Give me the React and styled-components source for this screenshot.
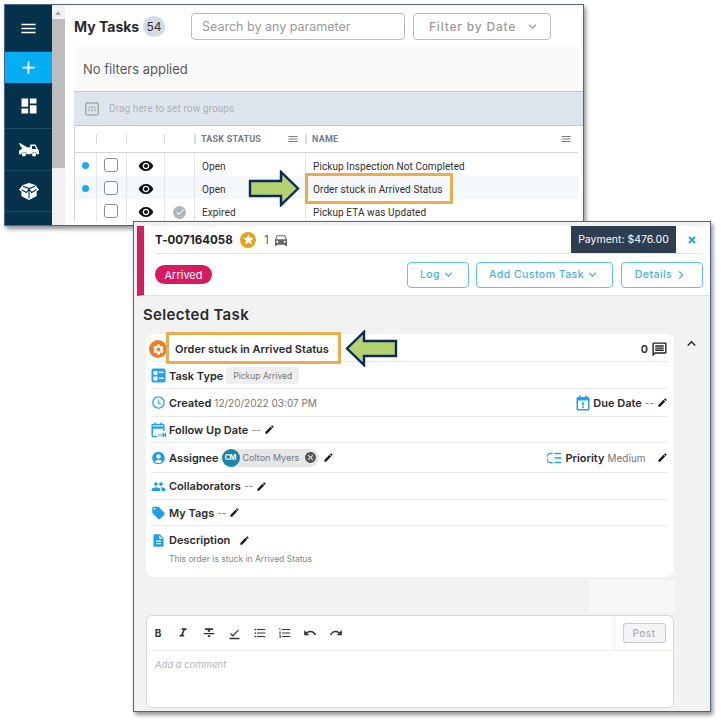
import React from "react";
import styled, { createGlobalStyle } from "styled-components";
import {
  MdMenu,
  MdAdd,
  MdDashboard,
  MdVisibility,
  MdStar,
  MdDirectionsCar,
  MdAccessTime,
  MdAccountCircle,
  MdPeople,
  MdLocalOffer,
  MdDescription,
  MdEdit,
  MdSettings,
  MdFormatItalic,
  MdFormatStrikethrough,
  MdFormatListBulleted,
  MdFormatListNumbered,
  MdUndo,
  MdRedo,
  MdCancel,
  MdOutlineMessage,
  MdKeyboardArrowDown,
  MdKeyboardArrowUp,
  MdKeyboardArrowRight,
  MdCheck,
} from "react-icons/md";

const Global = createGlobalStyle`
  html, body {
    margin: 0;
    background: #fff;
  }
  body {
    font-family: "Inter", "Noto Sans", sans-serif;
    color: #2b2b2b;
  }
  * {
    box-sizing: border-box;
  }
`;

const Canvas = styled.div`
  position: relative;
  width: 721px;
  height: 723px;
  overflow: hidden;
  background: #fff;
`;

const Win = styled.div`
  position: absolute;
  left: ${(p) => p.$left}px;
  top: ${(p) => p.$top}px;
  width: ${(p) => p.$w}px;
  height: ${(p) => p.$h}px;
  border: 1.5px solid #4f6590;
  box-shadow: 2px 3px 4px rgba(60, 60, 60, 0.55);
  background: #fff;
  overflow: hidden;
`;

const TasksWin = styled.div`
  display: flex;
  height: 100%;
`;

const Sidebar = styled.nav`
  width: 47px;
  flex: none;
  background: #04324a;
  color: #fff;
  display: flex;
  flex-direction: column;
`;

const SideItem = styled.div`
  height: ${(p) => p.$h}px;
  flex: none;
  display: flex;
  align-items: center;
  justify-content: center;
  background: ${(p) => (p.$active ? "#05aef2" : "transparent")};
  border-bottom: ${(p) => (p.$line ? "1px solid #1c4a60" : "none")};
`;

const ScrollTrack = styled.div`
  width: 13px;
  flex: none;
  background: #f1f1f1;
  position: relative;
  padding-top: 14px;
`;

const ScrollArrow = styled.div`
  position: absolute;
  top: 6px;
  left: 3px;
  width: 0;
  height: 0;
  border-left: 3.5px solid transparent;
  border-right: 3.5px solid transparent;
  border-bottom: 4px solid #a8a8a8;
`;

const ScrollThumb = styled.div`
  height: 149px;
  background: #bdbdbd;
`;

const TasksMain = styled.div`
  flex: 1;
  min-width: 0;
  padding-left: 9px;
  padding-right: 5px;
`;

const TopBar = styled.div`
  height: 42px;
  display: flex;
  align-items: center;
`;

const PageTitle = styled.div`
  font-size: 14px;
  font-weight: 700;
  color: #2b2b2b;
  width: 69px;
  white-space: nowrap;
`;

const CountBadge = styled.div`
  width: 22px;
  height: 21px;
  border-radius: 50%;
  background: #d4dbe5;
  font-size: 12px;
  display: flex;
  align-items: center;
  justify-content: center;
  color: #333;
`;

const SearchBox = styled.div`
  width: 214px;
  height: 27px;
  margin-left: 26px;
  border: 1px solid #bcbcbc;
  border-radius: 4px;
  padding-left: 10px;
  font-size: 12.5px;
  color: #9a9a9a;
  display: flex;
  align-items: center;
`;

const FilterBox = styled.div`
  width: 138px;
  height: 27px;
  margin-left: 8px;
  border: 1px solid #bcbcbc;
  border-radius: 4px;
  padding-left: 15px;
  font-size: 12px;
  letter-spacing: 0.8px;
  font-weight: 500;
  color: #9a9a9a;
  display: flex;
  align-items: center;
  gap: 9px;
`;

const FilterInfo = styled.div`
  height: 44px;
  margin-right: -5px;
  background: #fafafa;
  padding-left: 9px;
  display: flex;
  align-items: center;
  font-size: 13px;
  color: #5a5a5a;
`;

const GroupBar = styled.div`
  height: 35px;
  margin-right: -5px;
  background: #dfe5ec;
  border-top: 1px solid #c8c8c8;
  border-bottom: 1px solid #c8c8c8;
  display: flex;
  align-items: center;
  padding-left: 11px;
  gap: 10px;
  font-family: "Roboto", sans-serif;
  font-size: 10px;
  letter-spacing: 0.1px;
  color: #a9b2bd;
`;

const GridRow = styled.div`
  display: grid;
  grid-template-columns: 21px 30px 38px 30px 111px 1fr;
  height: ${(p) => p.$h}px;
  background: ${(p) => (p.$tint ? "#f5f8fb" : "#fff")};
  border-bottom: ${(p) => (p.$head ? "1px solid #d4d4d4" : "none")};
  border-left: 1px solid #d8d8d8;
  font-family: "Roboto", sans-serif;
`;

const HeadCell = styled.div`
  display: flex;
  align-items: center;
  justify-content: space-between;
  padding: 0 6px 0 ${(p) => (p.$text ? 7 : 0)}px;
  font-size: 9px;
  font-weight: 700;
  letter-spacing: 0.2px;
  color: #767c84;
  position: relative;
  &::after {
    content: "";
    position: absolute;
    left: 0;
    top: 8px;
    bottom: 8px;
    width: ${(p) => (p.$first ? 0 : p.$text ? 2 : 1)}px;
    background: #dcdcdc;
  }
`;

const Cell = styled.div`
  display: flex;
  align-items: center;
  justify-content: ${(p) => (p.$text ? "flex-start" : "center")};
  padding-left: ${(p) => (p.$text ? 7 : 0)}px;
  padding-top: 3px;
  font-size: 10px;
  letter-spacing: 0.1px;
  color: #2f2f2f;
  border-left: ${(p) => (p.$first ? "none" : "1px solid #e6e6e6")};
`;

const Dot = styled.span`
  width: 7px;
  height: 7px;
  border-radius: 50%;
  margin-top: -2px;
  background: #1ea7ea;
`;

const Checkbox = styled.span`
  width: 14px;
  height: 14px;
  margin: -3px 2px 0 0;
  border: 1px solid #8b9096;
  border-radius: 3px;
  background: #fff;
`;

const DoneMark = styled.span`
  width: 13px;
  height: 13px;
  border-radius: 50%;
  background: #abb6bd;
  color: #fff;
  display: flex;
  align-items: center;
  justify-content: center;
`;

const DetailWin = styled.div`
  height: 100%;
  background: #f1f2f2;
  display: flex;
  flex-direction: column;
  padding-top: 4px;
`;

const DetailHead = styled.header`
  height: 70px;
  flex: none;
  margin-left: 3px;
  background: #fff;
  border-left: 7px solid #d81b60;
  border-bottom: 1px solid #dfe2e6;
  padding-left: 11px;
  padding-right: 7px;
`;

const IdRow = styled.div`
  height: 28px;
  display: flex;
  align-items: center;
  border-bottom: 1px solid #e4e4e4;
  position: relative;
`;

const OrderId = styled.div`
  font-size: 11.5px;
  font-weight: 700;
  letter-spacing: 0.05px;
  color: #222;
  width: 85px;
  white-space: nowrap;
`;

const StarCircle = styled.span`
  width: 16px;
  height: 16px;
  border-radius: 50%;
  background: #e3a21a;
  color: #fff;
  display: flex;
  align-items: center;
  justify-content: center;
`;

const CarCount = styled.span`
  margin-left: 8px;
  font-size: 12px;
  color: #666;
  display: flex;
  align-items: center;
  gap: 4px;
`;

const PayTag = styled.div`
  margin-left: auto;
  margin-right: 27px;
  align-self: flex-start;
  width: 105px;
  height: 27px;
  background: #2c3e50;
  color: #fff;
  font-size: 10.5px;
  display: flex;
  align-items: center;
  justify-content: center;
`;

const CloseBtn = styled.svg`
  position: absolute;
  right: 7px;
  top: 10px;
`;

const ActionRow = styled.div`
  height: 41px;
  display: flex;
  align-items: center;
  gap: 7px;
`;

const StatusPill = styled.span`
  width: 57px;
  height: 19px;
  border-radius: 10px;
  background: #d81b60;
  color: #fff;
  font-size: 11px;
  display: flex;
  align-items: center;
  justify-content: center;
  margin-right: auto;
`;

const OutlineBtn = styled.button`
  width: ${(p) => p.$w}px;
  height: 26px;
  margin-left: ${(p) => p.$gap || 0}px;
  border: 1px solid #5cc3f3;
  border-radius: 4px;
  background: #fff;
  color: #43b4ec;
  font-family: inherit;
  font-size: 10.5px;
  font-weight: 500;
  letter-spacing: 0.45px;
  display: flex;
  align-items: center;
  justify-content: center;
  gap: 1px;
  padding: 0;
`;

const DetailBody = styled.div`
  flex: 1;
  padding: 0 36px 0 12px;
  position: relative;
`;

const SectionTitle = styled.h2`
  margin: 0 0 0 -3px;
  height: 38px;
  padding-bottom: 2px;
  font-size: 15px;
  font-weight: 600;
  letter-spacing: 0.35px;
  color: #2b2b2b;
  display: flex;
  align-items: center;
`;

const Card = styled.section`
  height: 243px;
  background: #fff;
  border-radius: 8px;
  padding: 0 6px 0 5px;
`;

const InfoRow = styled.div`
  height: ${(p) => p.$h}px;
  padding-top: ${(p) => p.$pad || 0}px;
  display: flex;
  align-items: center;
  border-bottom: ${(p) => (p.$last ? "none" : "1px solid #e8eaec")};
  font-size: 11px;
  gap: 3px;
  color: #777;
`;

const IconSlot = styled.span`
  width: 15px;
  height: 16px;
  flex: none;
  color: #1e9fee;
  display: flex;
  align-items: center;
  justify-content: center;
`;

const Label = styled.b`
  font-weight: 600;
  color: #2b2b2b;
`;

const Value = styled.span`
  font-size: 10px;
  color: #777;
  white-space: nowrap;
`;

const Push = styled.div`
  margin-left: auto;
  display: flex;
  align-items: center;
  gap: 3px;
`;

const TaskName = styled.div`
  margin-left: 5px;
  font-size: 11px;
  font-weight: 600;
  color: #2b2b2b;
`;

const GearCircle = styled.span`
  width: 18px;
  height: 18px;
  margin-left: -2px;
  flex: none;
  border-radius: 50%;
  background: #f47b20;
  color: #fff;
  display: flex;
  align-items: center;
  justify-content: center;
`;

const TypeChip = styled.span`
  height: 17px;
  padding: 0 7px;
  border-radius: 3px;
  background: #eeeeee;
  font-size: 8.5px;
  color: #777;
  display: flex;
  align-items: center;
`;

const PersonChip = styled.span`
  width: 97px;
  height: 18px;
  border-radius: 9px;
  background: #e6e6e6;
  font-size: 9px;
  color: #777;
  display: flex;
  align-items: center;
  gap: 3px;
  margin-right: 1px;
  white-space: nowrap;
`;

const Avatar = styled.span`
  width: 18px;
  height: 18px;
  flex: none;
  border-radius: 50%;
  background: #1b87ad;
  color: #fff;
  font-size: 7px;
  font-weight: 700;
  display: flex;
  align-items: center;
  justify-content: center;
`;

const ChipClose = styled.span`
  margin-left: auto;
  margin-right: 2px;
  color: #555;
  display: flex;
`;

const DescBlock = styled.div`
  height: 51px;
  padding-top: 6px;
`;

const DescHead = styled.div`
  display: flex;
  align-items: center;
  font-size: 11px;
  gap: 3px;
`;

const DescText = styled.div`
  margin: 6px 0 0 18px;
  font-size: 8.5px;
  color: #888;
`;

const CollapseBtn = styled.span`
  position: absolute;
  right: 10px;
  top: 39px;
  color: #222;
  display: flex;
`;

const Ghost = styled.div`
  width: 86px;
  height: 32px;
  margin: 3px -1px 3px auto;
  background: #f7f7f7;
`;

const Editor = styled.div`
  height: 93px;
  background: #fff;
  border: 1px solid #d6d8da;
  border-radius: 6px;
`;

const EditorBar = styled.div`
  height: 35px;
  border-bottom: 1px solid #f2f2f2;
  display: flex;
  align-items: center;
  gap: 3.4px;
  color: #333;
`;

const ToolBtn = styled.span`
  width: 22px;
  display: flex;
  align-items: center;
  justify-content: center;
  font-size: 10px;
  font-weight: 700;
`;

const PostArea = styled.div`
  margin-left: auto;
  width: 59px;
  height: 100%;
  border-left: 1px solid #eeeeee;
  display: flex;
  align-items: center;
  justify-content: center;
`;

const PostBtn = styled.button`
  width: 43px;
  height: 20px;
  padding: 0;
  border: 1px solid #c6cad2;
  border-radius: 3px;
  background: #f5f5f7;
  color: #a8adb8;
  font-family: inherit;
  font-size: 10px;
  font-weight: 500;
  letter-spacing: 0.5px;
`;

const Placeholder = styled.div`
  padding: 8px 0 0 8px;
  font-size: 9.5px;
  font-style: italic;
  color: #b5b5b5;
`;

// annotations pasted over the screenshots
const Highlight = styled.div`
  position: absolute;
  left: ${(p) => p.$left}px;
  top: ${(p) => p.$top}px;
  width: ${(p) => p.$w}px;
  height: ${(p) => p.$h}px;
  border: 3px solid #e9ae4c;
  border-radius: 1px;
`;

const ArrowSvg = styled.svg`
  position: absolute;
  left: ${(p) => p.$left}px;
  top: ${(p) => p.$top}px;
`;

const Pencil = () => <MdEdit size={11} color="#1a1a1a" />;

const GroupIcon = () => (
  <svg width="14" height="14" viewBox="0 0 14 14" fill="none" stroke="#a3a9b0">
    <rect x="0.75" y="1" width="12.5" height="12" rx="2" strokeWidth="1.5" />
    <path d="M3.5 5h7" strokeWidth="1" />
    <path d="M4 6.5v3M7 6.5v3M10 6.5v3" strokeWidth="1.2" />
  </svg>
);

const TowTruck = () => (
  <svg width="20" height="14" viewBox="0 0 20 14" fill="#fff">
    <path d="M0 .8l1-.8 7 4.2h3.2V1.6h5.2L19 6.4c.6.5 1 1 1 1.8v3h-2.1a2.9 2.9 0 0 0-5.6 0H7.7a2.9 2.9 0 0 0-5.6 0H0V7.6l3.2-1.8z" />
    <circle cx="4.9" cy="11.4" r="2.1" />
    <circle cx="15.1" cy="11.4" r="2.1" />
    <path d="M13 3h2.6l1.7 3H13z" fill="#04324a" />
  </svg>
);

const OpenBox = () => (
  <svg width="20" height="17" viewBox="0 0 20 17">
    <path
      d="M10 .5l6.2 2 3.3 4.3-2.4 1.5v4.6L10 16.5l-7.1-3.6V8.3L.5 6.8l3.3-4.3z"
      fill="#fff"
      stroke="#fff"
      strokeLinejoin="round"
    />
    <path
      d="M4 3.2L10 5.6l6-2.4M10 5.6v10M10 6l2.6 3.6 4.8-2.8M10 6L7.4 9.6 2.6 6.8"
      fill="none"
      stroke="#04324a"
      strokeWidth="1.1"
    />
  </svg>
);

const TaskTypeIcon = () => (
  <svg width="15" height="15" viewBox="0 0 15 15">
    <rect x="0.5" y="0.5" width="14" height="14" rx="2" fill="#22a2f0" />
    <rect x="2.5" y="3" width="4" height="4" fill="#fff" />
    <rect x="2.5" y="8.5" width="4" height="4" fill="#fff" />
    <rect x="8" y="3.5" width="4.5" height="1.5" fill="#fff" />
    <rect x="8" y="9.5" width="4.5" height="1.5" fill="#fff" />
  </svg>
);

const DueIcon = () => (
  <svg width="14" height="16" viewBox="0 0 14 16">
    <rect x="0.5" y="2" width="13" height="13.5" rx="1.5" fill="#22a2f0" />
    <rect x="3" y="0.5" width="1.6" height="3" fill="#22a2f0" />
    <rect x="9.4" y="0.5" width="1.6" height="3" fill="#22a2f0" />
    <rect x="2" y="5.5" width="10" height="8.5" fill="#fff" />
    <rect x="6.2" y="7" width="1.6" height="3.6" fill="#22a2f0" />
    <rect x="6.2" y="11.4" width="1.6" height="1.6" fill="#22a2f0" />
  </svg>
);

const FollowIcon = () => (
  <svg width="15" height="16" viewBox="0 0 15 16" fill="none" stroke="#22a2f0" strokeWidth="1.5">
    <path d="M6 14.5H2.2a1 1 0 0 1-1-1V3.4a1 1 0 0 1 1-1h9.6a1 1 0 0 1 1 1V9" />
    <path d="M1.2 5.6h11.6" strokeWidth="2.4" />
    <path d="M4 .6v3M10 .6v3" />
    <path d="M7 13h6.5M11.4 10.8l2.2 2.2-2.2 2.2M14.6 10.8v4.4" strokeWidth="1.2" />
  </svg>
);

const PriorityIcon = () => (
  <svg width="16" height="12" viewBox="0 0 16 12" fill="none" stroke="#22a2f0" strokeWidth="1.6">
    <path d="M6 1H4.6a4.4 4.4 0 0 0 0 10H6" />
    <path d="M8 1.2h7M8 6h7M8 10.8h7" />
  </svg>
);

const UnderCheck = () => (
  <svg width="13" height="13" viewBox="0 0 13 13" fill="none" stroke="#333" strokeWidth="1.2">
    <path d="M2.5 6.5l2.5 2.4 5.5-6" />
    <path d="M1.5 11.5h10" strokeWidth="1.5" />
  </svg>
);

const RightArrow = () => (
  <ArrowSvg $left={248} $top={170} width="53" height="37" viewBox="0 0 53 37">
    <path d="M2 11h31V2l17 16.5L33 35v-9H2z" fill="#b5d271" stroke="#0b2a57" strokeWidth="2.4" />
  </ArrowSvg>
);

const LeftArrow = () => (
  <ArrowSvg $left={344} $top={330} width="54" height="37" viewBox="0 0 54 37">
    <path d="M52 11H20V2L3 18.5 20 35v-9h32z" fill="#b5d271" stroke="#0b2a57" strokeWidth="2.4" />
  </ArrowSvg>
);

const tasks = [
  { dot: true, done: false, status: "Open", name: "Pickup Inspection Not Completed" },
  { dot: true, done: false, status: "Open", name: "Order stuck in Arrived Status", tint: true },
  { dot: false, done: true, status: "Expired", name: "Pickup ETA was Updated" },
];

const App = () => {
  return (
    <Canvas>
      <Global />

      <Win $left={4} $top={4} $w={580} $h={222}>
        <TasksWin>
          <Sidebar>
            <SideItem $h={47} $line>
              <MdMenu size={19} />
            </SideItem>
            <SideItem $h={31} $active>
              <MdAdd size={21} />
            </SideItem>
            <SideItem $h={46} $line>
              <MdDashboard size={20} />
            </SideItem>
            <SideItem $h={42} $line>
              <TowTruck />
            </SideItem>
            <SideItem $h={41} $line>
              <OpenBox />
            </SideItem>
          </Sidebar>
          <ScrollTrack>
            <ScrollArrow />
            <ScrollThumb />
          </ScrollTrack>
          <TasksMain>
            <TopBar>
              <PageTitle>My Tasks</PageTitle>
              <CountBadge>54</CountBadge>
              <SearchBox>Search by any parameter</SearchBox>
              <FilterBox>
                Filter by Date
                <MdKeyboardArrowDown size={15} />
              </FilterBox>
            </TopBar>
            <FilterInfo>No filters applied</FilterInfo>
            <GroupBar>
              <GroupIcon />
              Drag here to set row groups
            </GroupBar>
            <GridRow $h={27} $head>
              <HeadCell $first />
              <HeadCell />
              <HeadCell />
              <HeadCell />
              <HeadCell $text>
                TASK STATUS
                <MdMenu size={12} />
              </HeadCell>
              <HeadCell $text>
                NAME
                <MdMenu size={12} />
              </HeadCell>
            </GridRow>
            {tasks.map((t) => (
              <GridRow key={t.name} $h={23} $tint={t.tint}>
                <Cell $first>{t.dot && <Dot />}</Cell>
                <Cell>
                  <Checkbox />
                </Cell>
                <Cell>
                  <MdVisibility size={16} color="#111" />
                </Cell>
                <Cell>
                  {t.done && (
                    <DoneMark>
                      <MdCheck size={10} />
                    </DoneMark>
                  )}
                </Cell>
                <Cell $text>{t.status}</Cell>
                <Cell $text>{t.name}</Cell>
              </GridRow>
            ))}
          </TasksMain>
        </TasksWin>
      </Win>

      <Win $left={133} $top={221} $w={578} $h={491}>
        <DetailWin>
          <DetailHead>
            <IdRow>
              <OrderId>T-007164058</OrderId>
              <StarCircle>
                <MdStar size={13} />
              </StarCircle>
              <CarCount>
                1
                <MdDirectionsCar size={16} color="#666" />
              </CarCount>
              <PayTag>Payment: $476.00</PayTag>
              <CloseBtn width="8" height="8" viewBox="0 0 8 8" stroke="#2ba6e8" strokeWidth="2">
                <path d="M1 1l6 6M7 1L1 7" />
              </CloseBtn>
            </IdRow>
            <ActionRow>
              <StatusPill>Arrived</StatusPill>
              <OutlineBtn $w={62}>
                Log
                <MdKeyboardArrowDown size={15} />
              </OutlineBtn>
              <OutlineBtn $w={137}>
                Add Custom Task
                <MdKeyboardArrowDown size={15} />
              </OutlineBtn>
              <OutlineBtn $w={82} $gap={1}>
                Details
                <MdKeyboardArrowRight size={16} />
              </OutlineBtn>
            </ActionRow>
          </DetailHead>
          <DetailBody>
            <SectionTitle>Selected Task</SectionTitle>
            <CollapseBtn>
              <MdKeyboardArrowUp size={17} />
            </CollapseBtn>
            <Card>
              <InfoRow $h={28} $pad={3}>
                <GearCircle>
                  <MdSettings size={13} />
                </GearCircle>
                <TaskName>Order stuck in Arrived Status</TaskName>
                <Push>
                  <Label>0</Label>
                  <MdOutlineMessage size={17} color="#222" />
                </Push>
              </InfoRow>
              <InfoRow $h={27} $pad={1}>
                <IconSlot>
                  <TaskTypeIcon />
                </IconSlot>
                <Label>Task Type</Label>
                <TypeChip>Pickup Arrived</TypeChip>
              </InfoRow>
              <InfoRow $h={28}>
                <IconSlot>
                  <MdAccessTime size={17} />
                </IconSlot>
                <Label>Created</Label>
                <Value>12/20/2022 03:07 PM</Value>
                <Push>
                  <IconSlot>
                    <DueIcon />
                  </IconSlot>
                  <Label>Due Date</Label>
                  <Value>--</Value>
                  <Pencil />
                </Push>
              </InfoRow>
              <InfoRow $h={26}>
                <IconSlot>
                  <FollowIcon />
                </IconSlot>
                <Label>Follow Up Date</Label>
                <Value>--</Value>
                <Pencil />
              </InfoRow>
              <InfoRow $h={30}>
                <IconSlot>
                  <MdAccountCircle size={18} />
                </IconSlot>
                <Label>Assignee</Label>
                <PersonChip>
                  <Avatar>CM</Avatar>
                  Colton Myers
                  <ChipClose>
                    <MdCancel size={13} />
                  </ChipClose>
                </PersonChip>
                <Pencil />
                <Push>
                  <IconSlot>
                    <PriorityIcon />
                  </IconSlot>
                  <Label>Priority</Label>
                  <Value>Medium&nbsp;&nbsp;&nbsp;</Value>
                  <Pencil />
                </Push>
              </InfoRow>
              <InfoRow $h={27}>
                <IconSlot>
                  <MdPeople size={17} />
                </IconSlot>
                <Label>Collaborators</Label>
                <Value>--</Value>
                <Pencil />
              </InfoRow>
              <InfoRow $h={26}>
                <IconSlot>
                  <MdLocalOffer size={16} />
                </IconSlot>
                <Label>My Tags</Label>
                <Value>--</Value>
                <Pencil />
              </InfoRow>
              <DescBlock>
                <DescHead>
                  <IconSlot>
                    <MdDescription size={17} />
                  </IconSlot>
                  <Label>Description</Label>
                  &nbsp;
                  <Pencil />
                </DescHead>
                <DescText>This order is stuck in Arrived Status</DescText>
              </DescBlock>
            </Card>
            <Ghost />
            <Editor>
              <EditorBar>
                <ToolBtn>B</ToolBtn>
                <ToolBtn>
                  <MdFormatItalic size={14} />
                </ToolBtn>
                <ToolBtn>
                  <MdFormatStrikethrough size={14} />
                </ToolBtn>
                <ToolBtn>
                  <UnderCheck />
                </ToolBtn>
                <ToolBtn>
                  <MdFormatListBulleted size={14} />
                </ToolBtn>
                <ToolBtn>
                  <MdFormatListNumbered size={14} />
                </ToolBtn>
                <ToolBtn>
                  <MdUndo size={14} />
                </ToolBtn>
                <ToolBtn>
                  <MdRedo size={14} />
                </ToolBtn>
                <PostArea>
                  <PostBtn>Post</PostBtn>
                </PostArea>
              </EditorBar>
              <Placeholder>Add a comment</Placeholder>
            </Editor>
          </DetailBody>
        </DetailWin>
      </Win>

      <Highlight $left={305} $top={173} $w={148} $h={31} />
      <RightArrow />
      <Highlight $left={166} $top={332} $w={175} $h={32} />
      <LeftArrow />
    </Canvas>
  );
};

export default App;
